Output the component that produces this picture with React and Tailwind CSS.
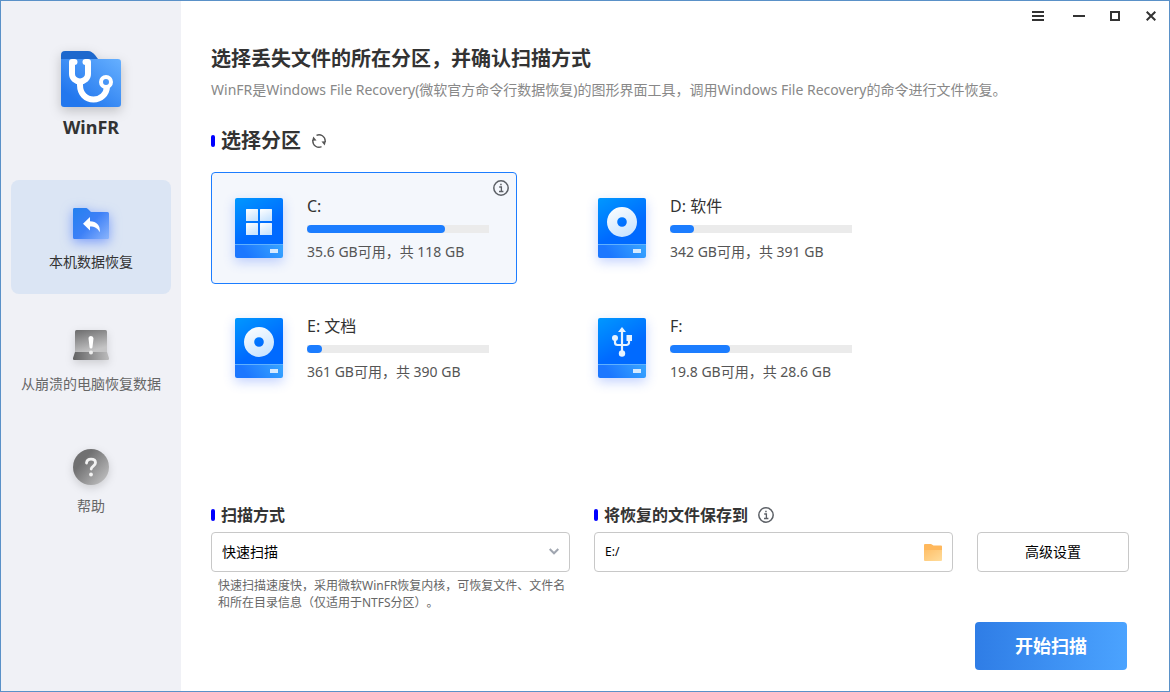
import React, { useState } from "react";

const drives = [
  { id: "c", name: "C:", usage: "35.6 GB可用，共 118 GB", used: 76, type: "windows" },
  { id: "d", name: "D: 软件", usage: "342 GB可用，共 391 GB", used: 13, type: "disc" },
  { id: "e", name: "E: 文档", usage: "361 GB可用，共 390 GB", used: 8, type: "disc" },
  { id: "f", name: "F:", usage: "19.8 GB可用，共 28.6 GB", used: 33, type: "usb" },
];

const Logo = () => (
  <svg width="60" height="56" viewBox="0 0 60 56" className="drop-shadow-[0_4px_6px_rgba(0,0,0,0.2)]">
    <defs>
      <linearGradient id="logoFront" x1="0.1" y1="0.9" x2="1" y2="0">
        <stop offset="0.1" stopColor="#2277ee" />
        <stop offset="1" stopColor="#66b0ff" />
      </linearGradient>
    </defs>
    <path d="M0 4a4 4 0 0 1 4-4h23c3 0 5 2 7 4l6 8v8H0z" fill="#1d68cd" />
    <path d="M0 8h57a3 3 0 0 1 3 3v42a3 3 0 0 1-3 3H3a3 3 0 0 1-3-3z" fill="url(#logoFront)" />
    <g fill="none" stroke="#fff">
      <path d="M13.500 11H11v12a8 7.500 0 0 0 16 0V11h-2.500" strokeWidth="6" strokeLinecap="round" strokeLinejoin="round" />
      <path d="M19 30v4c0 9 6 14.500 13.500 14.500S45.500 43 46 36" strokeWidth="6" />
      <circle cx="45" cy="31" r="5" strokeWidth="4" />
    </g>
  </svg>
);

const LocalIcon = () => (
  <svg width="36" height="36" viewBox="0 0 36 36" className="drop-shadow-[0_3px_6px_rgba(60,110,255,0.6)]">
    <defs>
      <linearGradient id="localFolder" x1="0" y1="0.1" x2="1" y2="0.9">
        <stop offset="0" stopColor="#2580f0" />
        <stop offset="0.5" stopColor="#3d80f7" />
        <stop offset="1" stopColor="#84b0fb" />
      </linearGradient>
    </defs>
    <path d="M0 4.500A1.500 1.500 0 0 1 1.500 3h11c1 0 2 .5 2.700 1.200L18 7h16.500A1.500 1.500 0 0 1 36 8.500v24a1.500 1.500 0 0 1-1.500 1.500h-33A1.500 1.500 0 0 1 0 32.500z" fill="url(#localFolder)" />
    <path d="M17 12v4.200c6.500.3 10.500 4 9.800 11-1.800-4-5-5.800-9.800-5.800v4.100l-7-6.700z" fill="#fff" />
  </svg>
);

const CrashIcon = () => (
  <svg width="36" height="36" viewBox="0 0 36 36" className="drop-shadow-[0_3px_4px_rgba(0,0,0,0.15)]">
    <defs>
      <linearGradient id="crashScreen" x1="0" y1="0" x2="0.4" y2="1">
        <stop offset="0" stopColor="#6b6b6c" />
        <stop offset="1" stopColor="#c4c4c5" />
      </linearGradient>
      <linearGradient id="crashBase" x1="0" y1="0" x2="1" y2="0">
        <stop offset="0" stopColor="#626263" />
        <stop offset="1" stopColor="#bcbcbd" />
      </linearGradient>
    </defs>
    <path d="M2 4.500A1.500 1.500 0 0 1 3.500 3h29A1.500 1.500 0 0 1 34 4.500V25H2z" fill="url(#crashScreen)" />
    <path d="M2 25h32l2 6a1.500 1.500 0 0 1-1.500 2h-33A1.500 1.500 0 0 1 0 31z" fill="url(#crashBase)" />
    <path d="M15.500 11.500a2.500 2.500 0 0 1 5 0l-1 8.500a1.500 1.500 0 0 1-3 0z" fill="#fff" />
    <circle cx="18" cy="25.500" r="2" fill="#eee" />
  </svg>
);

const HelpIcon = () => (
  <svg width="36" height="36" viewBox="0 0 36 36" className="drop-shadow-[0_3px_4px_rgba(0,0,0,0.15)]">
    <defs>
      <linearGradient id="helpCircle" x1="0.1" y1="0.2" x2="0.9" y2="0.9">
        <stop offset="0.2" stopColor="#707071" />
        <stop offset="1" stopColor="#bdbdbe" />
      </linearGradient>
    </defs>
    <circle cx="18" cy="18" r="18" fill="url(#helpCircle)" />
    <path d="M13.500 14c.3-2.600 2-3.800 4.500-3.800s4.500 1.300 4.500 3.600c0 3.200-4.300 3.300-4.300 6.200" fill="none" stroke="#f2f2f2" strokeWidth="2.800" strokeLinecap="round" />
    <circle cx="18" cy="25.500" r="1.900" fill="#f2f2f2" />
  </svg>
);

const InfoIcon = () => (
  <svg width="16" height="16" viewBox="0 0 16 16" fill="none" stroke="#5c6066">
    <circle cx="8" cy="8" r="7.200" strokeWidth="1.500" />
    <path d="M6.200 7h2.200v4.500M6 11.500h4.400" strokeWidth="1.300" />
    <path d="M7.200 4.600h1.500" strokeWidth="1.500" />
  </svg>
);

const RefreshIcon = () => (
  <svg width="14" height="14" viewBox="0 0 14 14" fill="none" stroke="#555" strokeWidth="1.400">
    <path d="M4.500 1.300A6.200 6.200 0 0 1 13.200 7v1" />
    <path d="M9.500 12.700A6.200 6.200 0 0 1 .8 7V6" />
    <path d="M9.500 7.500l4.400-.3-1.200 4.300z" fill="#555" stroke="none" />
    <path d="M4.500 6.500L.1 6.800l1.200-4.300z" fill="#555" stroke="none" />
  </svg>
);

const FolderIcon = () => (
  <svg width="18" height="17" viewBox="0 0 18 17">
    <defs>
      <linearGradient id="saveFolder" x1="0" y1="0" x2="1" y2="1">
        <stop offset="0" stopColor="#ffc069" />
        <stop offset="1" stopColor="#ffdc9b" />
      </linearGradient>
    </defs>
    <path d="M0 1a1 1 0 0 1 1-1h6l2.500 1.500H17a1 1 0 0 1 1 1V8H0z" fill="#ffb85c" />
    <path d="M0 6h18v10a1 1 0 0 1-1 1H1a1 1 0 0 1-1-1z" fill="url(#saveFolder)" />
  </svg>
);

const DriveIcon = ({ type }) => (
  <svg width="48" height="60" viewBox="0 0 48 60" className="shrink-0 rounded-xs shadow-[0_4px_12px_rgba(60,110,255,0.3)]">
    <defs>
      <linearGradient id="driveTop" x1="0" y1="0" x2="0.6" y2="1">
        <stop offset="0" stopColor="#0098ff" />
        <stop offset="0.75" stopColor="#006aff" />
      </linearGradient>
      <linearGradient id="driveBottom" x1="0" y1="0.6" x2="1" y2="0.4">
        <stop offset="0.2" stopColor="#1c77ff" />
        <stop offset="1" stopColor="#36a2ff" />
      </linearGradient>
      <linearGradient id="driveGlyph" x1="0" y1="0" x2="0.5" y2="1">
        <stop offset="0" stopColor="#fff" />
        <stop offset="1" stopColor="#cbe5ff" />
      </linearGradient>
    </defs>
    <path d="M0 0h48v46H0z" fill="url(#driveTop)" />
    <path d="M0 46h48v14H0z" fill="url(#driveBottom)" />
    <path d="M0 46.500h48" stroke="#5fb0ff" />
    <path d="M35 51h8v4h-8z" fill="#d6eaff" />
    {type === "windows" && (
      <g fill="url(#driveGlyph)">
        <rect x="11" y="11" width="12" height="12" rx="0.500" />
        <rect x="25" y="11" width="12" height="12" rx="0.500" />
        <rect x="11" y="25" width="12" height="12" rx="0.500" />
        <rect x="25" y="25" width="12" height="12" rx="0.500" />
      </g>
    )}
    {type === "disc" && (
      <path fillRule="evenodd" d="M24 9a15 15 0 1 1 0 30a15 15 0 0 1 0-30zm0 10.200a4.800 4.800 0 1 0 0 9.600a4.800 4.800 0 0 0 0-9.600z" fill="url(#driveGlyph)" />
    )}
    {type === "usb" && (
      <g fill="#e6f3ff">
        <path d="M24 9l4 5h-8z" />
        <circle cx="17" cy="20" r="3" />
        <path d="M28.500 17h5.500v6h-5.500z" />
        <circle cx="24" cy="35.500" r="3.200" />
        <path d="M24 13v22M17 20v4.500a2.500 2.500 0 0 0 2.500 2.500h9a2.500 2.500 0 0 0 2.500-2.500V20" fill="none" stroke="#e6f3ff" strokeWidth="2.200" />
      </g>
    )}
  </svg>
);

const navItems = [
  { id: "local", label: "本机数据恢复", Icon: LocalIcon },
  { id: "crash", label: "从崩溃的电脑恢复数据", Icon: CrashIcon },
  { id: "help", label: "帮助", Icon: HelpIcon },
];

const Marker = () => <span className="w-1 h-3 rounded-xs bg-[#0000ff]" />;

const App = () => {
  const [page, setPage] = useState("local");
  const [drive, setDrive] = useState("c");
  const [target, setTarget] = useState("E:/");

  return (
    <div className="flex min-h-screen border border-[#5a91c8] bg-white text-[#333] font-['Noto_Sans','Noto_Sans_CJK_SC',sans-serif] [text-spacing-trim:space-all]">
      {/* Sidebar */}
      <aside className="w-[180px] shrink-0 bg-[#f0f1f6] px-[10px] pt-[50px]">
        <div className="flex flex-col items-center">
          <Logo />
          <div className="mt-2 text-lg leading-6 font-bold">WinFR</div>
        </div>
        <nav className="mt-[41px] flex flex-col gap-2">
          {navItems.map(({ id, label, Icon }) => (
            <button
              key={id}
              onClick={() => setPage(id)}
              className={`flex h-[114px] flex-col items-center rounded-lg pt-[25px] text-sm leading-5 whitespace-nowrap ${
                page === id ? "bg-[#dbe5f4] text-[#333]" : "text-[#666]"
              }`}
            >
              <Icon />
              <span className="mt-[11px]">{label}</span>
            </button>
          ))}
        </nav>
      </aside>

      <main className="flex min-w-0 flex-1 flex-col">
        {/* Window controls */}
        <div className="flex h-[30px] shrink-0 justify-end">
          <button aria-label="菜单" className="mr-[5px] flex w-9 items-center justify-center">
            <svg width="12" height="10" viewBox="0 0 12 10" fill="#333">
              <path d="M0 0h12v2H0zM0 4h12v2H0zM0 8h12v2H0z" />
            </svg>
          </button>
          <button aria-label="最小化" className="flex w-9 items-center justify-center">
            <svg width="12" height="2" viewBox="0 0 12 2" fill="#333">
              <path d="M0 0h12v2H0z" />
            </svg>
          </button>
          <button aria-label="最大化" className="flex w-9 items-center justify-center">
            <svg width="10" height="10" viewBox="0 0 10 10" fill="none" stroke="#333" strokeWidth="2">
              <path d="M1 1h8v8H1z" />
            </svg>
          </button>
          <button aria-label="关闭" className="flex w-9 items-center justify-center">
            <svg width="10" height="10" viewBox="0 0 10 10" stroke="#333" strokeWidth="2">
              <path d="M.7.700l8.600 8.600M9.300.700L.700 9.300" />
            </svg>
          </button>
        </div>

        <div className="flex flex-1 flex-col pt-[14px] pr-10 pb-[21px] pl-[30px]">
          <h1 className="text-xl leading-7 font-bold">选择丢失文件的所在分区，并确认扫描方式</h1>
          <p className="mt-[7px] text-sm leading-5 text-[#888]">
            WinFR是Windows File Recovery(微软官方命令行数据恢复)的图形界面工具，调用Windows File Recovery的命令进行文件恢复。
          </p>

          <div className="mt-[27px] flex items-center gap-[6px]">
            <Marker />
            <h2 className="text-xl leading-7 font-bold">选择分区</h2>
            <button aria-label="刷新" className="ml-[5px]">
              <RefreshIcon />
            </button>
          </div>

          {/* Drives */}
          <div className="mt-[17px] grid max-w-[669px] grid-cols-2 gap-x-[57px] gap-y-2">
            {drives.map((item) => (
              <button
                key={item.id}
                onClick={() => setDrive(item.id)}
                className={`relative flex h-28 items-center gap-6 rounded-sm border pr-[27px] pl-[23px] text-left ${
                  drive === item.id ? "border-[#1c7dff] bg-[#f4f7fc]" : "border-transparent"
                }`}
              >
                <DriveIcon type={item.type} />
                <span className="flex flex-1 flex-col">
                  <span className="text-base leading-6">{item.name}</span>
                  <span className="mt-[7px] h-2 bg-[#ebebeb]">
                    <span className="block h-2 rounded-sm bg-[#1c7dff]" style={{ width: `${item.used}%` }} />
                  </span>
                  <span className="mt-[9px] text-sm leading-5 whitespace-nowrap text-[#555]">{item.usage}</span>
                </span>
                {drive === item.id && (
                  <span className="absolute top-[7px] right-[7px]">
                    <InfoIcon />
                  </span>
                )}
              </button>
            ))}
          </div>

          {/* Scan options */}
          <div className="mt-auto flex items-start gap-6 pt-8">
            <div className="flex-1">
              <div className="flex items-center gap-[6px]">
                <Marker />
                <label htmlFor="mode" className="text-base leading-6 font-bold">扫描方式</label>
              </div>
              <div className="relative mt-[5px]">
                <select
                  id="mode"
                  className="block h-10 w-full appearance-none rounded-sm border border-[#c8c8c8] bg-white px-[10px] text-sm text-black"
                >
                  <option>快速扫描</option>
                </select>
                <svg width="10" height="7" viewBox="0 0 10 7" fill="none" stroke="#a0a6b0" strokeWidth="2" className="pointer-events-none absolute top-4 right-[11px]">
                  <path d="M.7 1L5 5.300 9.300 1" />
                </svg>
              </div>
              <p className="mt-[5px] pl-[7px] text-xs leading-[17px] text-[#666]">
                快速扫描速度快，采用微软WinFR恢复内核，可恢复文件、文件名和所在目录信息（仅适用于NTFS分区）。
              </p>
            </div>

            <div className="flex-1">
              <div className="flex items-center gap-[6px]">
                <Marker />
                <label htmlFor="target" className="text-base leading-6 font-bold">将恢复的文件保存到</label>
                <span className="ml-1">
                  <InfoIcon />
                </span>
              </div>
              <div className="mt-[5px] flex h-10 items-center rounded-sm border border-[#c8c8c8] px-[10px]">
                <input
                  id="target"
                  type="text"
                  value={target}
                  onChange={(e) => setTarget(e.target.value)}
                  className="min-w-0 flex-1 text-xs text-black outline-none"
                />
                <button aria-label="浏览">
                  <FolderIcon />
                </button>
              </div>
            </div>

            <button className="mt-[29px] h-10 w-[152px] rounded-sm border border-[#c8c8c8] text-sm text-black">
              高级设置
            </button>
          </div>

          <button className="mt-[11px] mr-[2px] h-12 w-[152px] self-end rounded-sm bg-linear-to-r from-[#2f7de6] to-[#4ba3ff] text-lg font-bold text-white">
            开始扫描
          </button>
        </div>
      </main>
    </div>
  );
};

export default App;
